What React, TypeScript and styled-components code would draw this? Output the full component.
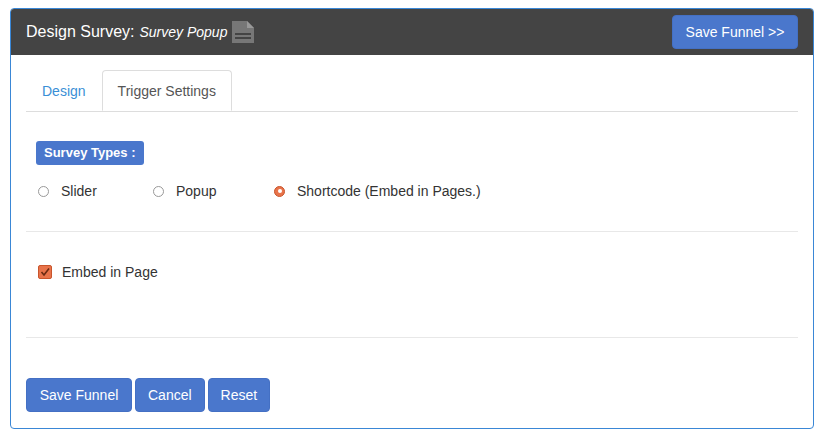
import styled, { createGlobalStyle } from "styled-components";

const Global = createGlobalStyle`
  body { margin: 0; font-family: "Liberation Sans", Arial, sans-serif; font-size: 14px; color: #333; background: #fff; }
`;

const Page = styled.div`
  padding: 8px 8px 8px 10px;
  width: 821px;
  box-sizing: border-box;
`;

const Panel = styled.div`
  width: 804px;
  height: 421px;
  box-sizing: border-box;
  border: 1px solid #3a87d6;
  border-radius: 4px;
  display: flex;
  flex-direction: column;
  overflow: hidden;
`;

const Header = styled.div`
  height: 46px;
  background: #444;
  display: flex;
  align-items: center;
  justify-content: space-between;
  padding: 0 15px 0 15px;
  flex-shrink: 0;
`;

const Title = styled.div`
  color: #fff;
  font-size: 16px;
  display: flex;
  align-items: center;
  em { font-size: 14px; margin-left: 5px; }
  svg { margin-left: 3px; }
`;

const Button = styled.button`
  background: #4a77cc;
  color: #fff;
  border: 1px solid #4470c4;
  border-radius: 4px;
  font-family: inherit;
  font-size: 14px;
  height: 34px;
  padding: 0 12px;
`;

const HeaderButton = styled(Button)`
  width: 126px;
`;

const Body = styled.div`
  padding: 15px 15px 0 15px;
  flex: 1;
  display: flex;
  flex-direction: column;
`;

const Tabs = styled.div`
  display: flex;
  border-bottom: 1px solid #ddd;
  height: 41px;
`;

const Tab = styled.div<{ $active?: boolean }>`
  padding: 0 15px;
  height: 41px;
  margin-bottom: -1px;
  display: flex;
  align-items: center;
  color: ${(p) => (p.$active ? "#555" : "#3a8fd6")};
  border: 1px solid ${(p) => (p.$active ? "#ddd" : "transparent")};
  border-bottom-color: ${(p) => (p.$active ? "#fff" : "transparent")};
  border-radius: 4px 4px 0 0;
  background: #fff;
  box-sizing: border-box;
`;

const Section = styled.div`
  padding: 29px 10px 0 10px;
  height: 120px;
  box-sizing: border-box;
  border-bottom: 1px solid #e8e8e8;
`;

const Badge = styled.span`
  display: inline-block;
  background: #4a77cc;
  color: #fff;
  font-weight: bold;
  font-size: 13px;
  padding: 4px 8px 5px;
  border-radius: 3px;
`;

const RadioRow = styled.div`
  display: flex;
  margin-top: 18px;
  padding-left: 2px;
`;

const Option = styled.label<{ $w: number }>`
  width: ${(p) => p.$w}px;
  display: flex;
  align-items: center;
  gap: 12px;
`;

const Radio = styled.span<{ $on?: boolean }>`
  width: 11px;
  height: 11px;
  border-radius: 50%;
  box-sizing: border-box;
  border: 1px solid ${(p) => (p.$on ? "#c9552c" : "#999")};
  background: ${(p) => (p.$on ? "#e8734a" : "#fff")};
  display: flex;
  align-items: center;
  justify-content: center;
  &::after {
    content: "";
    width: 4px;
    height: 4px;
    border-radius: 50%;
    background: ${(p) => (p.$on ? "#fff" : "transparent")};
  }
`;

const EmbedSection = styled.div`
  height: 106px;
  border-bottom: 1px solid #e8e8e8;
  padding: 32px 12px 0;
  box-sizing: border-box;
`;

const Check = styled.label`
  display: flex;
  align-items: center;
  gap: 10px;
`;

const Box = styled.span`
  width: 12px;
  height: 12px;
  border-radius: 2px;
  background: #e8734a;
  border: 1px solid #c9552c;
  display: flex;
  align-items: center;
  justify-content: center;
`;

const Footer = styled.div`
  display: flex;
  gap: 3px;
  padding-top: 40px;
`;

export default function App() {
  return (
    <Page>
      <Global />
      <Panel>
        <Header>
          <Title>
            Design Survey: <em>Survey Popup</em>
            <svg width="26" height="26" viewBox="0 0 26 26">
              <path d="M2 2h15l7 7v15H2z" fill="#777" />
              <path d="M17 2v7h7" fill="#999" />
              <rect x="5" y="14" width="16" height="2" fill="#444" />
              <rect x="5" y="18" width="16" height="2" fill="#444" />
            </svg>
          </Title>
          <HeaderButton>Save Funnel &gt;&gt;</HeaderButton>
        </Header>
        <Body>
          <Tabs>
            <Tab>Design</Tab>
            <Tab $active>Trigger Settings</Tab>
          </Tabs>
          <Section>
            <Badge>Survey Types :</Badge>
            <RadioRow>
              <Option $w={115}><Radio />Slider</Option>
              <Option $w={121}><Radio />Popup</Option>
              <Option $w={260}><Radio $on />Shortcode (Embed in Pages.)</Option>
            </RadioRow>
          </Section>
          <EmbedSection>
            <Check>
              <Box>
                <svg width="10" height="10" viewBox="0 0 10 10">
                  <path d="M1.5 5l2.5 3L9 1.5" stroke="#6b2a12" strokeWidth="1.6" fill="none" />
                </svg>
              </Box>
              Embed in Page
            </Check>
          </EmbedSection>
          <Footer>
            <Button style={{ width: 106 }}>Save Funnel</Button>
            <Button>Cancel</Button>
            <Button>Reset</Button>
          </Footer>
        </Body>
      </Panel>
    </Page>
  );
}
